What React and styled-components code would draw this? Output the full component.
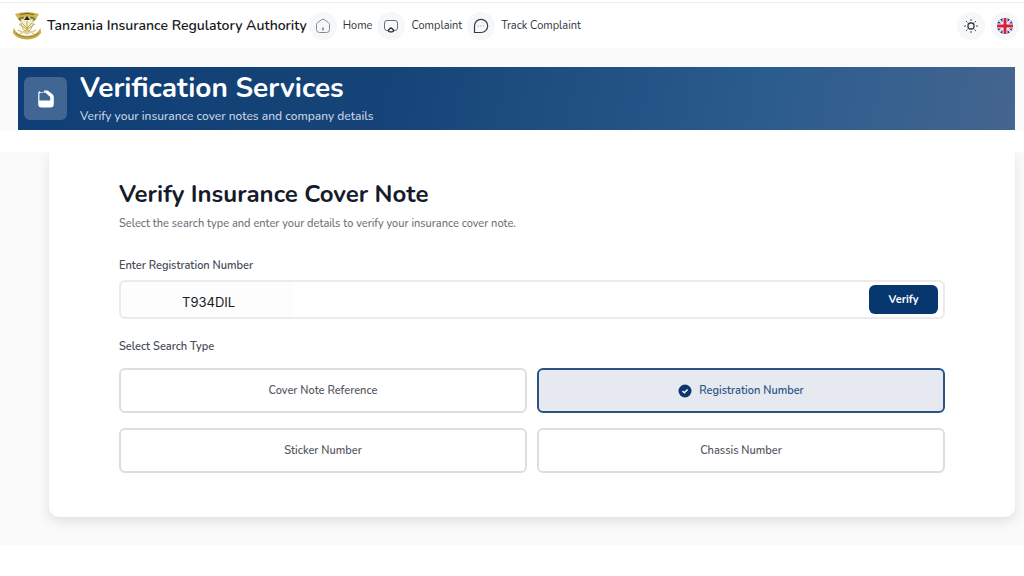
import { useState } from 'react';
import styled, { createGlobalStyle, css } from 'styled-components';

const GlobalStyle = createGlobalStyle`
	* {
		box-sizing: border-box;
	}

	body {
		margin: 0;
		background: #fff;
		color: #111827;
		font-family: Nunito, 'Open Sans', 'Noto Sans', sans-serif;
	}

	h1, h2, p {
		margin: 0;
	}

	button, input {
		font-family: inherit;
	}
`;

const Header = styled.header`
	display: flex;
	align-items: center;
	justify-content: space-between;
	height: 46px;
	margin-top: 2px;
	padding: 0 5px 0 12px;
	border-top: 1px solid #ececee;
	background: #fff;
`;

const HeaderGroup = styled.div`
	display: flex;
	align-items: center;
	gap: ${({ $gap }) => $gap}px;
`;

const Brand = styled.a`
	display: flex;
	align-items: center;
	gap: 5px;
	color: #16181d;
	font-size: 14px;
	font-weight: 600;
	line-height: 20px;
	text-decoration: none;
	white-space: nowrap;
`;

const Nav = styled.nav`
	display: flex;
	align-items: center;
	gap: 5px;
`;

const NavLink = styled.a`
	display: flex;
	align-items: center;
	gap: 6px;
	color: #30343b;
	font-size: 11px;
	line-height: 16px;
	text-decoration: none;
	white-space: nowrap;
`;

const round = css`
	display: flex;
	align-items: center;
	justify-content: center;
	width: 28px;
	height: 28px;
	border-radius: 50%;
	background: #f6f7f9;
	color: #30343b;
`;

const NavIcon = styled.span`
	${round}
`;

const RoundButton = styled.button`
	${round}
	padding: 0;
	border: 0;
	cursor: pointer;
`;

const BannerArea = styled.section`
	padding: 19px 9px 0 18px;
	background: #fafafa;
`;

const Banner = styled.div`
	display: flex;
	align-items: center;
	gap: 13px;
	height: 63px;
	padding: 0 6px;
	background: linear-gradient(100deg, #0f3f76 0%, #164478 38%, #2b5c8e 75%, #44658f 100%);
	color: #fff;
`;

const BannerIcon = styled.span`
	display: flex;
	align-items: center;
	justify-content: center;
	width: 43px;
	height: 43px;
	border-radius: 6px;
	background: #416694;
`;

const BannerContent = styled.div`
	padding-bottom: 4px;
`;

const BannerTitle = styled.h1`
	font-size: 28px;
	font-weight: 700;
	line-height: 38px;
`;

const BannerText = styled.p`
	color: #c9d5e4;
	font-size: 12px;
	font-weight: 500;
	line-height: 18px;
`;

const Main = styled.main`
	margin-top: 22px;
	padding: 0 9px 28px 49px;
	background: #fafafa;
	overflow: hidden;
`;

const Card = styled.section`
	padding: 26px 70px 44px 70px;
	border-radius: 0 0 10px 10px;
	background: #fff;
	box-shadow: 0 5px 12px rgba(0, 0, 0, 0.1);
`;

const Title = styled.h2`
	color: #151b2b;
	font-size: 24px;
	font-weight: 700;
	line-height: 32px;
`;

const Subtitle = styled.p`
	margin-top: 6px;
	color: #6b7078;
	font-size: 11px;
	font-weight: 500;
	line-height: 16px;
`;

const Label = styled.label`
	display: block;
	margin-top: 26px;
	color: #454b57;
	font-size: 11px;
	font-weight: 600;
	line-height: 16px;
`;

const GroupLabel = styled(Label).attrs({ as: 'div' })`
	margin-top: 20px;
`;

const SearchBox = styled.div`
	display: flex;
	align-items: center;
	height: 39px;
	margin-top: 6px;
	padding-right: 5px;
	border: 2px solid #ebebec;
	border-radius: 6px;
	background: linear-gradient(90deg, #fdfdfd 172px, #fff 172px);
`;

const SearchInput = styled.input`
	flex: 1;
	min-width: 0;
	height: 100%;
	padding: 4px 0 0 61px;
	border: 0;
	outline: 0;
	background: transparent;
	color: #17191d;
	font-family: Inter, sans-serif;
	font-size: 13px;
`;

const VerifyButton = styled.button`
	width: 69px;
	height: 29px;
	padding: 0;
	border: 0;
	border-radius: 6px;
	background: #06376f;
	color: #fff;
	font-size: 11px;
	font-weight: 700;
	cursor: pointer;
`;

const Options = styled.div`
	display: grid;
	grid-template-columns: 1fr 1fr;
	gap: 15px 10px;
	margin-top: 13px;
`;

const Option = styled.button`
	display: flex;
	align-items: center;
	justify-content: center;
	gap: 7px;
	height: 45px;
	padding: 0;
	border: 2px solid ${({ $active }) => ($active ? '#2c5380' : '#dddee0')};
	border-radius: 6px;
	background: ${({ $active }) => ($active ? '#e6eaf0' : '#fff')};
	color: ${({ $active }) => ($active ? '#2a5283' : '#555a64')};
	font-size: 11px;
	font-weight: 600;
	cursor: pointer;
`;

const Emblem = () => (
	<svg width="30" height="30" viewBox="0 0 30 30" fill="none" aria-hidden="true">
		<path d="M3 3q12-4 24 0l-3 5q-9-3-18 0z" fill="#d0b54d" />
		<path d="M8 3.500q7-2 14 0" stroke="#6d5b20" />
		<path d="M6 8q4-3 6-2l-1 4H8zM24 8q-4-3-6-2l1 4h3z" fill="#63734b" />
		<path d="M9 8h12v5q-1 6-6 9-5-3-6-9z" fill="#f5efcf" stroke="#cdb868" />
		<path d="m12 9 3-4 3 4z" fill="#22241c" />
		<path d="M15 10v14M7 13l15 10M23 13 8 23M10 12l5 5 5-5" stroke="#c0a858" />
		<path d="M6 19q9 6 18 0" stroke="#e0d294" strokeWidth="2" />
		<path d="M1.500 17q3 7 13.500 8 10.500-1 13.500-8l.5 5q-4 6-14 6.500Q5 28 1 22z" fill="#c8aa3e" />
		<path d="M4 22.500q11 7 22 0" stroke="#a08a3c" />
	</svg>
);

const HomeIcon = () => (
	<svg width="16" height="16" viewBox="0 0 16 16" fill="none" stroke="#858991" aria-hidden="true">
		<path d="M1.500 6.500q0-1 1-1.800l4-3q1.500-1 3 0l4 3q1 .8 1 1.800v5q0 3-3 3h-7q-3 0-3-3z" />
		<path d="M8 10v2" stroke="#30343b" strokeLinecap="round" />
	</svg>
);

const ComplaintIcon = () => (
	<svg width="16" height="16" viewBox="0 0 16 16" fill="none" stroke="#6a6f77" aria-hidden="true">
		<path d="M5 12.500H4q-2.500 0-2.500-2.500V5Q1.500 2.500 4 2.500h8q2.500 0 2.500 2.500v5q0 2.500-2.500 2.500h-1" />
		<path d="m5.200 12.500 1.800-2q1-1 2 0l1.800 2q-.5 1.300-1.800 1.300H7q-1.300 0-1.800-1.300z" stroke="#25282e" strokeWidth="1.200" />
	</svg>
);

const TrackIcon = () => (
	<svg width="16" height="16" viewBox="0 0 16 16" fill="none" stroke="#363a42" strokeWidth="1.200" aria-hidden="true">
		<path d="M1.500 14.500V8A6.600 6.600 0 1 1 8 14.500z" strokeLinejoin="round" />
		<path d="M4.700 8h1.200M7.400 8h1.200M10.100 8h1.200" stroke="#9b9fa6" />
	</svg>
);

const SunIcon = () => (
	<svg width="14" height="14" viewBox="0 0 14 14" fill="none" stroke="#363a42" strokeLinecap="round" aria-hidden="true">
		<rect x="4" y="4" width="6" height="6" rx="2.500" strokeWidth="1.300" />
		<path d="M7 .5v1M7 12.500v1M.5 7h1M12.500 7h1M2.400 2.400l.7.7M10.900 10.900l.7.7M2.400 11.600l.7-.7M10.900 3.100l.7-.7" />
	</svg>
);

const FlagIcon = () => (
	<svg width="16" height="16" viewBox="0 0 16 16" aria-hidden="true">
		<clipPath id="flag">
			<circle cx="8" cy="8" r="8" />
		</clipPath>
		<g clipPath="url(#flag)">
			<path d="M0 0h16v16H0z" fill="#2c3190" />
			<path d="m0 0 16 16M16 0 0 16" stroke="#fff" strokeWidth="2" />
			<path d="m0 0 16 16M16 0 0 16" stroke="#e28ba0" strokeWidth=".6" />
			<path d="M8 0v16M0 8h16" stroke="#fff" strokeWidth="5" />
			<path d="M8 0v16M0 8h16" stroke="#d3203f" strokeWidth="3" />
		</g>
	</svg>
);

const PolicyIcon = () => (
	<svg width="18" height="18" viewBox="0 0 18 18" aria-hidden="true">
		<path
			d="M1.200 3.500Q1 1.500 3 1v1.200h4V.6h3q1 0 2 .9l3.500 2.800q1.300 1 1.300 2.700V14q0 3.500-3.500 3.500H4.500Q1.200 17.500 1.200 14zM2.400 3.300v7.200h10.800V7L8.200 2.600z"
			fill="#fff"
			fillRule="evenodd"
		/>
	</svg>
);

const CheckIcon = () => (
	<svg width="14" height="14" viewBox="0 0 14 14" fill="none" aria-hidden="true">
		<circle cx="7" cy="7" r="6.500" fill="#0c3870" />
		<path d="m4.500 7 1.900 1.800 3.200-3.300" stroke="#fff" strokeWidth="1.500" />
	</svg>
);

const links = [
	{ text: 'Home', Icon: HomeIcon },
	{ text: 'Complaint', Icon: ComplaintIcon },
	{ text: 'Track Complaint', Icon: TrackIcon }
];

const searchTypes = ['Cover Note Reference', 'Registration Number', 'Sticker Number', 'Chassis Number'];

const App = () => {
	const [type, setType] = useState('Registration Number');
	const [number, setNumber] = useState('T934DIL');

	return (
		<>
			<GlobalStyle />
			<Header>
				<HeaderGroup $gap={2}>
					<Brand href="#">
						<Emblem />
						Tanzania Insurance Regulatory Authority
					</Brand>
					<Nav>
						{links.map(({ text, Icon }) => (
							<NavLink href="#" key={text}>
								<NavIcon>
									<Icon />
								</NavIcon>
								{text}
							</NavLink>
						))}
					</Nav>
				</HeaderGroup>
				<HeaderGroup $gap={6}>
					<RoundButton aria-label="Theme">
						<SunIcon />
					</RoundButton>
					<RoundButton aria-label="Language">
						<FlagIcon />
					</RoundButton>
				</HeaderGroup>
			</Header>

			<BannerArea>
				<Banner>
					<BannerIcon>
						<PolicyIcon />
					</BannerIcon>
					<BannerContent>
						<BannerTitle>Verification Services</BannerTitle>
						<BannerText>Verify your insurance cover notes and company details</BannerText>
					</BannerContent>
				</Banner>
			</BannerArea>

			<Main>
				<Card>
					<Title>Verify Insurance Cover Note</Title>
					<Subtitle>Select the search type and enter your details to verify your insurance cover note.</Subtitle>
					<Label htmlFor="number">Enter Registration Number</Label>
					<SearchBox>
						<SearchInput id="number" value={number} onChange={(e) => setNumber(e.target.value)} />
						<VerifyButton>Verify</VerifyButton>
					</SearchBox>
					<GroupLabel id="search-type">Select Search Type</GroupLabel>
					<Options role="group" aria-labelledby="search-type">
						{searchTypes.map((item) => (
							<Option key={item} $active={item === type} aria-pressed={item === type} onClick={() => setType(item)}>
								{item === type && <CheckIcon />}
								{item}
							</Option>
						))}
					</Options>
				</Card>
			</Main>
		</>
	);
};

export default App;
